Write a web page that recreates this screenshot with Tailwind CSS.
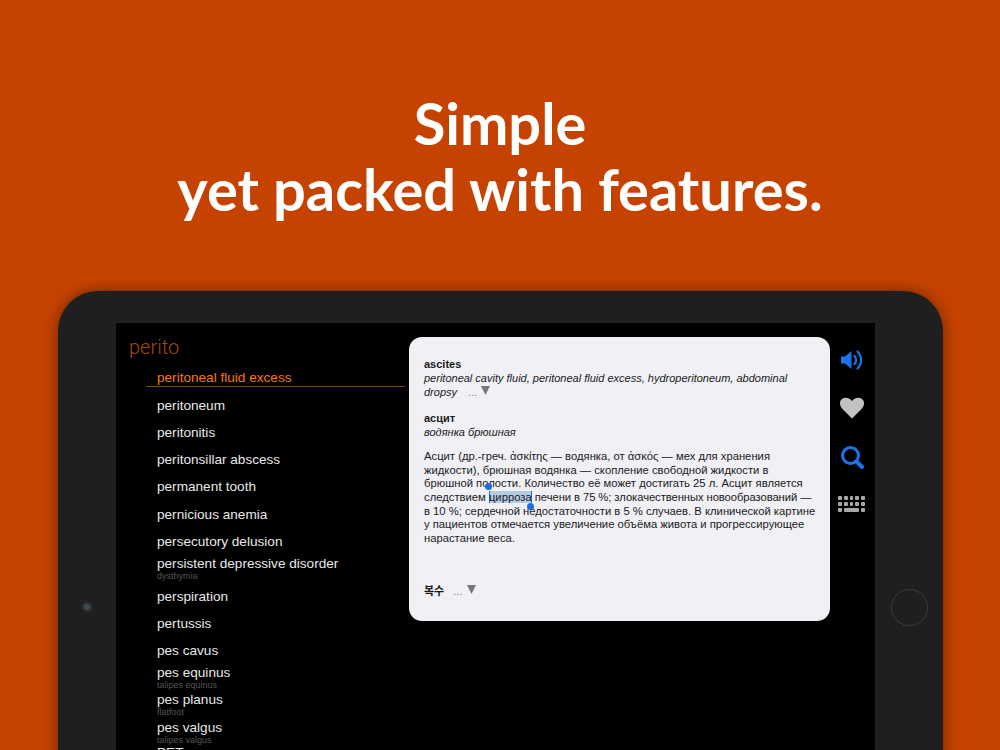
<!DOCTYPE html>
<html lang="en">
<head>
  <meta charset="UTF-8" />
  <title>Simple yet packed with features</title>
  <script src="https://cdn.jsdelivr.net/npm/@tailwindcss/browser@4"></script>
</head>
<body class="bg-[#c64200] font-['Liberation_Sans','Noto_Sans_CJK_KR',sans-serif]">
  <div class="h-[750px] overflow-hidden flex flex-col items-center">
    <!-- Headline -->
    <h1 class="h-[291px] shrink-0 pt-[90px] text-center text-white text-[57.8px] leading-[66px] font-bold font-['Lato',sans-serif]">Simple<br>yet packed with features.</h1>

    <!-- Tablet -->
    <div class="w-[885px] h-[520px] shrink-0 ml-px bg-[#1f1f1f] rounded-t-[40px] shadow-[0_0_14px_rgba(40,20,0,0.6)] flex pt-8">
      <div class="w-[58px] h-[568px] flex items-center justify-center -mt-8">
        <div class="w-[6px] h-[6px] mt-[64px] rounded-full bg-[#3f4c55] shadow-[0_0_3px_2px_rgba(110,110,110,0.3)]"></div>
      </div>

      <!-- Screen -->
      <div class="w-[759px] h-[488px] bg-black flex">
        <!-- Word list -->
        <div class="w-[293px] shrink-0">
          <div class="h-[41px] pl-[13px] pt-[12px] text-[#a34a08] text-[20px] leading-[24px] font-light font-['Roboto',sans-serif]">perito</div>
          <ul class="pl-[30px] text-[13.6px] leading-[16px] text-[#e8e8e8]">
            <li class="h-[22.500px] mr-[4px] pl-[11px] pt-[6px] border-b border-[#84480a] text-[#f47c00]">peritoneal fluid excess</li>
            <li class="h-[27.3px] pl-[11px] pt-[11px]">peritoneum</li>
            <li class="h-[27.3px] pl-[11px] pt-[11px]">peritonitis</li>
            <li class="h-[27.3px] pl-[11px] pt-[11px]">peritonsillar abscess</li>
            <li class="h-[27.3px] pl-[11px] pt-[11px]">permanent tooth</li>
            <li class="h-[27.3px] pl-[11px] pt-[11px]">pernicious anemia</li>
            <li class="h-[27.3px] pl-[11px] pt-[11px]">persecutory delusion</li>
            <li class="h-[27.3px] pl-[11px] pt-[5.500px]">persistent depressive disorder<span class="block text-[9px] leading-[9px] text-[#555]">dysthymia</span></li>
            <li class="h-[27.3px] pl-[11px] pt-[11px]">perspiration</li>
            <li class="h-[27.3px] pl-[11px] pt-[11px]">pertussis</li>
            <li class="h-[27.3px] pl-[11px] pt-[11px]">pes cavus</li>
            <li class="h-[27.3px] pl-[11px] pt-[5.500px]">pes equinus<span class="block text-[9px] leading-[9px] text-[#555]">talipes equinus</span></li>
            <li class="h-[27.3px] pl-[11px] pt-[5.500px]">pes planus<span class="block text-[9px] leading-[9px] text-[#555]">flatfoot</span></li>
            <li class="h-[27.3px] pl-[11px] pt-[5.500px]">pes valgus<span class="block text-[9px] leading-[9px] text-[#555]">talipes valgus</span></li>
            <li class="h-[27.3px] pl-[11px] pt-[4px]">PET</li>
          </ul>
        </div>

        <!-- Definition card -->
        <div class="w-[421px] h-[284px] shrink-0 mt-[14px] bg-[#f0f0f5] rounded-[13px] pl-[15px] pt-[20px] text-[11px] leading-[14px] text-[#1a1a1a]">
          <p class="font-bold">ascites</p>
          <p class="italic">peritoneal cavity fluid, peritoneal fluid excess, hydroperitoneum, abdominal<br>dropsy <span class="not-italic text-[#888] ml-2">...</span> <svg class="inline-block w-[11px] h-[9px] align-[1px]" viewBox="0 0 11 9"><path d="M1 0h9L5.500 9z" fill="#777"/></svg></p>
          <p class="font-bold mt-[12px]">асцит</p>
          <p class="italic">водянка брюшная</p>
          <p class="mt-[11px] text-[11.25px] leading-[13.65px]">Асцит (др.-греч. ἀσκίτης — водянка, от ἀσκός — мех для хранения<br>жидкости), брюшная водянка — скопление свободной жидкости в<br>брюшной полости. Количество её может достигать 25 л. Асцит является<br>следствием <span class="relative bg-[#b4cbe6] shadow-[inset_1px_0_#1a6fe0,inset_-1px_0_#1a6fe0]">цирроза<span class="absolute -left-[3.500px] -top-[8px] w-[7px] h-[7px] rounded-full bg-[#1a6fe0]"></span><span class="absolute -right-[2px] top-[12px] w-[7px] h-[7px] rounded-full bg-[#1a6fe0]"></span></span> <span class="tracking-[-0.08px]">печени в 75 %; злокачественных новообразований —</span><br>в 10 %; сердечной недостаточности в 5 % случаев. В клинической картине<br>у пациентов отмечается увеличение объёма живота и прогрессирующее<br>нарастание веса.</p>
          <p class="mt-[38px]"><span class="font-bold">복수</span> <span class="text-[#888] ml-1.5">...</span> <svg class="inline-block w-[11px] h-[9px] align-[1px]" viewBox="0 0 11 9"><path d="M1 0h9L5.500 9z" fill="#777"/></svg></p>
        </div>

        <!-- Tool icons -->
        <div class="flex-1 flex flex-col items-center pt-[25px] pr-[2px]">
          <svg class="w-[24px] h-[24px]" viewBox="0 0 24 24">
            <path d="M1 8.500h4l6.500-5.500v18L5 15.500H1z" fill="#1a73e8"/>
            <path d="M14.500 8a6 6 0 0 1 0 8M17.500 3.500a12 12 0 0 1 0 17" fill="none" stroke="#1a73e8" stroke-width="2.300" stroke-linecap="round"/>
          </svg>
          <svg class="w-[24px] h-[22px] mt-[25px]" viewBox="0 0 24 22">
            <path d="M12 21.500 2 11.500C-1 8-.5 4 2 2c3-2.200 7-1.500 10 2 3-3.500 7-4.200 10-2 2.500 2 3 6 0 9.500z" fill="#c2c2c2"/>
          </svg>
          <svg class="w-[24px] h-[24px] mt-[26px]" viewBox="0 0 24 24">
            <circle cx="10.500" cy="10.500" r="8" fill="none" stroke="#1a73e8" stroke-width="3"/>
            <path d="M16.500 16.500 22 22" stroke="#1a73e8" stroke-width="4" stroke-linecap="round"/>
          </svg>
          <div class="w-[27px] grid grid-cols-5 gap-x-[2px] gap-y-[2.500px] mt-[27px]">
            <i class="h-[3.500px] rounded-[1px] bg-[#a8a8a8]"></i><i class="h-[3.500px] rounded-[1px] bg-[#a8a8a8]"></i><i class="h-[3.500px] rounded-[1px] bg-[#a8a8a8]"></i><i class="h-[3.500px] rounded-[1px] bg-[#a8a8a8]"></i><i class="h-[3.500px] rounded-[1px] bg-[#a8a8a8]"></i>
            <i class="h-[3.500px] rounded-[1px] bg-[#a8a8a8]"></i><i class="h-[3.500px] rounded-[1px] bg-[#a8a8a8]"></i><i class="h-[3.500px] rounded-[1px] bg-[#a8a8a8]"></i><i class="h-[3.500px] rounded-[1px] bg-[#a8a8a8]"></i><i class="h-[3.500px] rounded-[1px] bg-[#a8a8a8]"></i>
            <i class="h-[3.500px] rounded-[1px] bg-[#a8a8a8]"></i><i class="h-[3.500px] rounded-[1px] bg-[#a8a8a8] col-span-3"></i><i class="h-[3.500px] rounded-[1px] bg-[#a8a8a8]"></i>
          </div>
        </div>
      </div>

      <div class="flex-1 h-[568px] flex items-center justify-center -mt-8">
        <div class="w-[37px] h-[37px] mt-[64px] rounded-full border border-[#3c3c3c]"></div>
      </div>
    </div>
  </div>
</body>
</html>
